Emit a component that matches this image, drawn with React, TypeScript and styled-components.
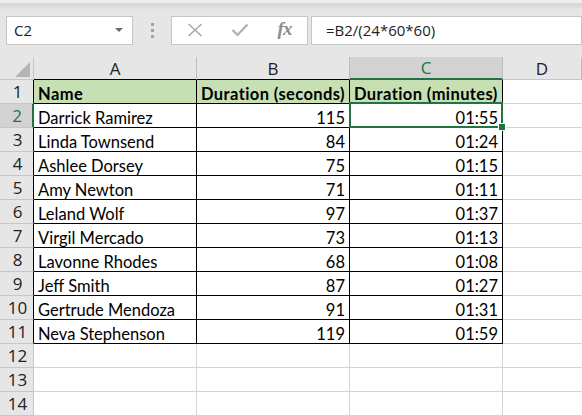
import React from 'react';
import styled, { createGlobalStyle } from 'styled-components';

const GlobalStyle = createGlobalStyle`
  html, body {
    margin: 0;
    padding: 0;
    background: #ffffff;
    overflow: hidden;
  }
`;

const GREEN = '#217346';
const GRID = '#d4d4d4';
const HEAD_LINE = '#c6c6c6';
const UI_FONT = `"Open Sans", "Noto Sans", sans-serif`;
const CELL_FONT = `Lato, "Liberation Sans", sans-serif`;

const Page = styled.div`
  width: 582px;
  height: 416px;
  display: flex;
  flex-direction: column;
  background: #e6e6e6;
  overflow: hidden;
`;

const TopStrip = styled.div`
  height: 3px;
  background: #f0eeec;
`;

const FormulaBar = styled.div`
  height: 55px;
  display: flex;
  align-items: flex-start;
  padding: 13px 0 0 6px;
  box-sizing: border-box;
  background: linear-gradient(#d5d5d5, #e6e6e6 7px);
`;

const Box = styled.div<{ $width?: number }>`
  height: 29px;
  box-sizing: border-box;
  background: #ffffff;
  border: 1px solid ${HEAD_LINE};
  display: flex;
  align-items: center;
  ${(p) => (p.$width ? `width: ${p.$width}px;` : 'flex: 1;')}
`;

const NameText = styled.span`
  flex: 1;
  padding-left: 7px;
  font: 15px ${UI_FONT};
  color: #222;
`;

const DropArrow = styled.span`
  width: 0;
  height: 0;
  margin-right: 9px;
  border-left: 4px solid transparent;
  border-right: 4px solid transparent;
  border-top: 4px solid #6a6a6a;
`;

const Grip = styled.div`
  width: 38px;
  height: 29px;
  display: flex;
  flex-direction: column;
  align-items: center;
  justify-content: center;
  gap: 3px;
`;

const GripDot = styled.span`
  width: 3px;
  height: 3px;
  background: #a3a3a3;
`;

const FxIcons = styled.div`
  display: flex;
  align-items: center;
`;

const IconSlot = styled.span`
  width: 45px;
  display: flex;
  justify-content: center;
  align-items: center;
`;

const Fx = styled.span`
  font: italic bold 19px "Liberation Serif", serif;
  color: #8c8c8c;
  letter-spacing: -1px;
  margin-top: -2px;
`;

const FormulaInput = styled(Box)`
  margin-left: 3px;
  border-right: 1px solid ${HEAD_LINE};
`;

const FormulaText = styled.span`
  padding-left: 14px;
  font: 15px ${UI_FONT};
  color: #222;
`;

const Sheet = styled.div`
  flex: 1;
  display: grid;
  grid-template-columns: 34px 163px 153px 153px 1fr;
  grid-template-rows: 23px repeat(14, 24px);
  background: #ffffff;
`;

const Corner = styled.div`
  background: #e6e6e6;
  border-right: 1px solid ${HEAD_LINE};
  border-bottom: 1px solid ${HEAD_LINE};
  display: flex;
  align-items: flex-end;
  justify-content: flex-end;
  padding: 0 3px 2px 0;
`;

const ColHeader = styled.div<{ $selected?: boolean; $bottom: string }>`
  box-sizing: border-box;
  display: flex;
  align-items: center;
  justify-content: center;
  font: 17px ${UI_FONT};
  color: ${(p) => (p.$selected ? GREEN : '#222')};
  background: ${(p) => (p.$selected ? '#d2d2d2' : '#e6e6e6')};
  border-right: 1px solid #bdbdbd;
  border-bottom: ${(p) => (p.$selected ? `2px solid ${GREEN}` : `1px solid ${p.$bottom}`)};
`;

const RowHeader = styled.div<{ $selected?: boolean; $edge: string }>`
  box-sizing: border-box;
  display: flex;
  align-items: center;
  justify-content: center;
  padding-left: 2px;
  font: 17px ${UI_FONT};
  color: ${(p) => (p.$selected ? GREEN : '#222')};
  background: ${(p) => (p.$selected ? '#d2d2d2' : '#e6e6e6')};
  border-bottom: 1px solid ${HEAD_LINE};
  border-right: ${(p) => (p.$selected ? `2px solid ${GREEN}` : `1px solid ${p.$edge}`)};
`;

const Cell = styled.div<{
  $head?: boolean;
  $right?: boolean;
  $line: string;
  $noRight?: boolean;
  $active?: boolean;
}>`
  position: relative;
  z-index: ${(p) => (p.$active ? 2 : 0)};
  box-sizing: border-box;
  display: flex;
  align-items: flex-end;
  justify-content: ${(p) => (p.$right ? 'flex-end' : 'flex-start')};
  padding: 0 4px 1px 4px;
  white-space: nowrap;
  font: ${(p) => (p.$head ? 'bold' : 'normal')} 16.5px ${CELL_FONT};
  letter-spacing: ${(p) => (p.$head ? '0.4px' : '0')};
  line-height: 16px;
  color: #000;
  background: ${(p) => (p.$head ? '#c6e0b4' : '#ffffff')};
  border-bottom: 1px solid ${(p) => p.$line};
  border-right: ${(p) => (p.$noRight ? 'none' : `1px solid ${p.$line}`)};
`;

const Selection = styled.div`
  position: absolute;
  left: -1px;
  top: -2px;
  right: -1px;
  bottom: -1px;
  border: 2px solid ${GREEN};
  pointer-events: none;
`;

const FillHandle = styled.div`
  position: absolute;
  right: -5px;
  bottom: -5px;
  width: 6px;
  height: 6px;
  background: ${GREEN};
  border: 1px solid #ffffff;
`;

const people: [string, number, string][] = [
  ['Darrick Ramirez', 115, '01:55'],
  ['Linda Townsend', 84, '01:24'],
  ['Ashlee Dorsey', 75, '01:15'],
  ['Amy Newton', 71, '01:11'],
  ['Leland Wolf', 97, '01:37'],
  ['Virgil Mercado', 73, '01:13'],
  ['Lavonne Rhodes', 68, '01:08'],
  ['Jeff Smith', 87, '01:27'],
  ['Gertrude Mendoza', 91, '01:31'],
  ['Neva Stephenson', 119, '01:59'],
];

function CrossIcon() {
  return (
    <svg width="16" height="14" viewBox="0 0 16 14">
      <path d="M1.5 1 L14.5 13 M14.5 1 L1.5 13" stroke="#a6a6a6" strokeWidth="1.5" fill="none" />
    </svg>
  );
}

function CheckIcon() {
  return (
    <svg width="18" height="14" viewBox="0 0 18 14">
      <path d="M1.5 7 L6.5 12 L16.5 1.5" stroke="#b0b0b0" strokeWidth="2.2" fill="none" />
    </svg>
  );
}

function CornerTriangle() {
  return (
    <svg width="15" height="15" viewBox="0 0 15 15">
      <polygon points="15,0 15,15 0,15" fill="#b4b4b4" />
    </svg>
  );
}

export default function App() {
  const totalRows = 14;

  return (
    <>
      <GlobalStyle />
      <Page>
        <TopStrip />
        <FormulaBar>
          <Box $width={127}>
            <NameText>C2</NameText>
            <DropArrow />
          </Box>
          <Grip>
            <GripDot />
            <GripDot />
            <GripDot />
          </Grip>
          <Box $width={137}>
            <FxIcons>
              <IconSlot>
                <CrossIcon />
              </IconSlot>
              <IconSlot>
                <CheckIcon />
              </IconSlot>
              <IconSlot>
                <Fx>fx</Fx>
              </IconSlot>
            </FxIcons>
          </Box>
          <FormulaInput>
            <FormulaText>=B2/(24*60*60)</FormulaText>
          </FormulaInput>
        </FormulaBar>

        <Sheet>
          <Corner>
            <CornerTriangle />
          </Corner>
          <ColHeader $bottom="#000">A</ColHeader>
          <ColHeader $bottom="#000">B</ColHeader>
          <ColHeader $bottom="#000" $selected>
            C
          </ColHeader>
          <ColHeader $bottom={HEAD_LINE}>D</ColHeader>

          {Array.from({ length: totalRows }, (_, i) => {
            const row = i + 1;
            const inTable = row <= 11;
            const line = inTable ? '#000' : GRID;
            const person = row >= 2 && row <= 11 ? people[row - 2] : null;
            return (
              <React.Fragment key={row}>
                <RowHeader $selected={row === 2} $edge={inTable ? '#000' : HEAD_LINE}>
                  {row}
                </RowHeader>
                {row === 1 ? (
                  <>
                    <Cell $head $line={line}>Name</Cell>
                    <Cell $head $line={line}>Duration (seconds)</Cell>
                    <Cell $head $line={line}>Duration (minutes)</Cell>
                  </>
                ) : (
                  <>
                    <Cell $line={line}>{person?.[0]}</Cell>
                    <Cell $right $line={line}>{person?.[1]}</Cell>
                    <Cell $right $line={line} $active={row === 2}>
                      {person?.[2]}
                      {row === 2 && (
                        <Selection>
                          <FillHandle />
                        </Selection>
                      )}
                    </Cell>
                  </>
                )}
                <Cell $line={GRID} $noRight />
              </React.Fragment>
            );
          })}
        </Sheet>
      </Page>
    </>
  );
}
